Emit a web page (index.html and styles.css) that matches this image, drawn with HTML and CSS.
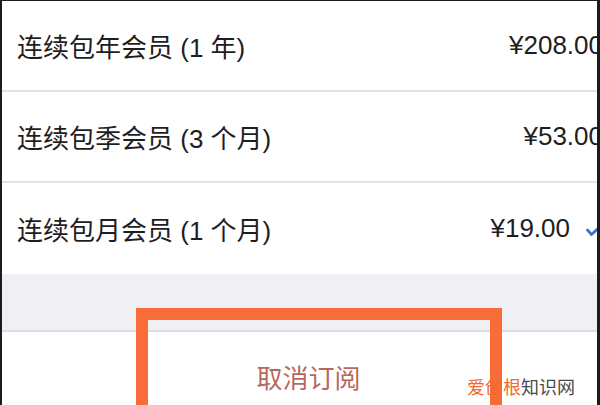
FILE: index.html
```html
<!DOCTYPE html>
<html lang="zh-CN">
<head>
<meta charset="utf-8">
<title>订阅</title>
<link rel="stylesheet" href="styles.css">
</head>
<body>
<div class="frame">
  <div class="list">
    <div class="row">
      <span class="name">连续包年会员 (1 年)</span>
      <span class="price">¥208.00</span>
    </div>
    <div class="row">
      <span class="name">连续包季会员 (3 个月)</span>
      <span class="price">¥53.00</span>
    </div>
    <div class="row row-last">
      <span class="name">连续包月会员 (1 个月)</span>
      <span class="price price-checked">¥19.00</span>
      <svg class="check" viewBox="0 0 18 14" width="18" height="14" aria-hidden="true">
        <path d="M1.5 7 L5.5 11.5 L16.5 1.5" fill="none" stroke="#3b78c8" stroke-width="2.8" stroke-linecap="round" stroke-linejoin="round"/>
      </svg>
    </div>
  </div>
  <div class="gap"></div>
  <div class="cancel"><span class="cancel-text">取消订阅</span></div>
  <div class="highlight"></div>
  <div class="watermark"><span class="wm-a">爱创根</span><span class="wm-b">知识网</span></div>
</div>
</body>
</html>
```
FILE: styles.css
```css
* { box-sizing: border-box; }
html, body { margin: 0; padding: 0; background: #ffffff; }
.frame {
  position: relative;
  width: 600px;
  height: 405px;
  overflow: hidden;
  background: #ffffff;
  border-top: 1px solid #1c1c1c;
  border-left: 2px solid #1c1c1c;
  border-right: 3px solid #1c1c1c;
  font-family: "Liberation Sans", "Noto Sans CJK SC", sans-serif;
  color: #1e1e1e;
}
.list { display: flex; flex-direction: column; }
.row {
  display: flex;
  align-items: center;
  height: 91px;
  padding-left: 15px;
  border-bottom: 2px solid #e2e2e4;
  font-size: 26px;
}
.row-last { border-bottom: none; }
.name { white-space: nowrap; }
.price { margin-left: auto; margin-right: -6px; white-space: nowrap; }
.price-checked { margin-right: 0; }
.check { margin-left: 16px; margin-right: -7px; margin-top: 2px; flex: none; }
.gap {
  height: 58px;
  background: #efeff4;
  border-bottom: 2px solid #dedee2;
}
.cancel {
  display: flex;
  justify-content: center;
  align-items: center;
  height: 90px;
  padding-left: 18px;
}
.cancel-text {
  font-family: "Noto Sans CJK SC", sans-serif;
  font-size: 26px;
  line-height: 34px;
  color: #b8675d;
}
.highlight {
  position: absolute;
  left: 134px;
  top: 307px;
  width: 366px;
  height: 130px;
  border: 12px solid #f86c3a;
}
.watermark {
  position: absolute;
  left: 465px;
  top: 373px;
  font-family: "Noto Sans CJK SC", sans-serif;
  font-size: 18px;
  line-height: 24px;
  white-space: nowrap;
}
.wm-a { color: #f2692c; }
.wm-b { color: #4a4a4a; }
```
